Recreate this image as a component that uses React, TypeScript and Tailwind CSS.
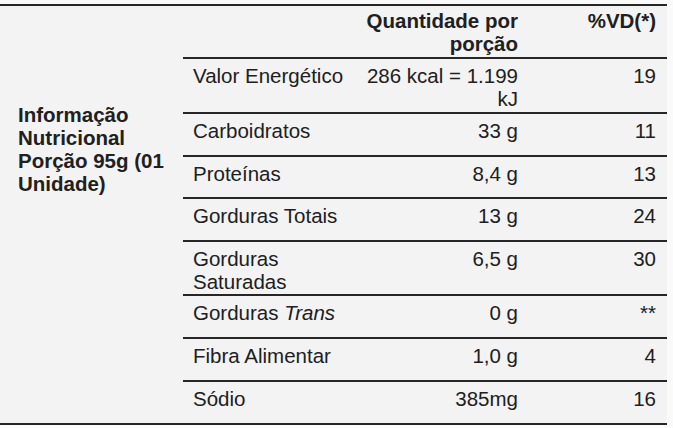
import React from "react";

type Row = {
  name: React.ReactNode;
  qty: React.ReactNode;
  vd: string;
  h: string;
};

const rows: Row[] = [
  { name: "Valor Energético", qty: <>286 kcal = 1.199<br />kJ</>, vd: "19", h: "h-[55px]" },
  { name: "Carboidratos", qty: "33 g", vd: "11", h: "h-[43px]" },
  { name: "Proteínas", qty: "8,4 g", vd: "13", h: "h-[42px]" },
  { name: "Gorduras Totais", qty: "13 g", vd: "24", h: "h-[43px]" },
  { name: <>Gorduras<br />Saturadas</>, qty: "6,5 g", vd: "30", h: "h-[54px]" },
  { name: <>Gorduras <i>Trans</i></>, qty: "0 g", vd: "**", h: "h-[43px]" },
  { name: "Fibra Alimentar", qty: "1,0 g", vd: "4", h: "h-[43px]" },
  { name: "Sódio", qty: "385mg", vd: "16", h: "h-[43px]" },
];

export default function App() {
  return (
    <div className="w-[673px] h-[428px] bg-[#fafafa] pt-[4px] text-[#202020] text-[20.5px] leading-[23px] font-['Liberation_Sans',Arial,sans-serif]">
      <div className="w-[667px] flex bg-[#f3f3f3] border-t-2 border-b-2 border-[#262626]">
        {/* Left caption cell */}
        <div className="w-[183px] shrink-0 pl-[18px] pt-[97px] font-bold whitespace-nowrap">
          Informação
          <br />
          Nutricional
          <br />
          Porção 95g (01
          <br />
          Unidade)
        </div>

        <div className="flex-1 flex flex-col">
          {/* Header */}
          <div className="h-[51px] flex font-bold pt-[3px]">
            <div className="w-[174px] shrink-0" />
            <div className="w-[171px] shrink-0 pr-[10px] text-right whitespace-nowrap">
              Quantidade por
              <br />
              porção
            </div>
            <div className="flex-1 pr-[11px] text-right">%VD(*)</div>
          </div>

          {rows.map((r, i) => (
            <div key={i} className={`${r.h} flex border-t-2 border-[#262626] pt-[5px] whitespace-nowrap`}>
              <div className="w-[174px] shrink-0 pl-[10px]">{r.name}</div>
              <div className="w-[171px] shrink-0 pr-[10px] text-right">{r.qty}</div>
              <div className="flex-1 pr-[11px] text-right">{r.vd}</div>
            </div>
          ))}
        </div>
      </div>
    </div>
  );
}
